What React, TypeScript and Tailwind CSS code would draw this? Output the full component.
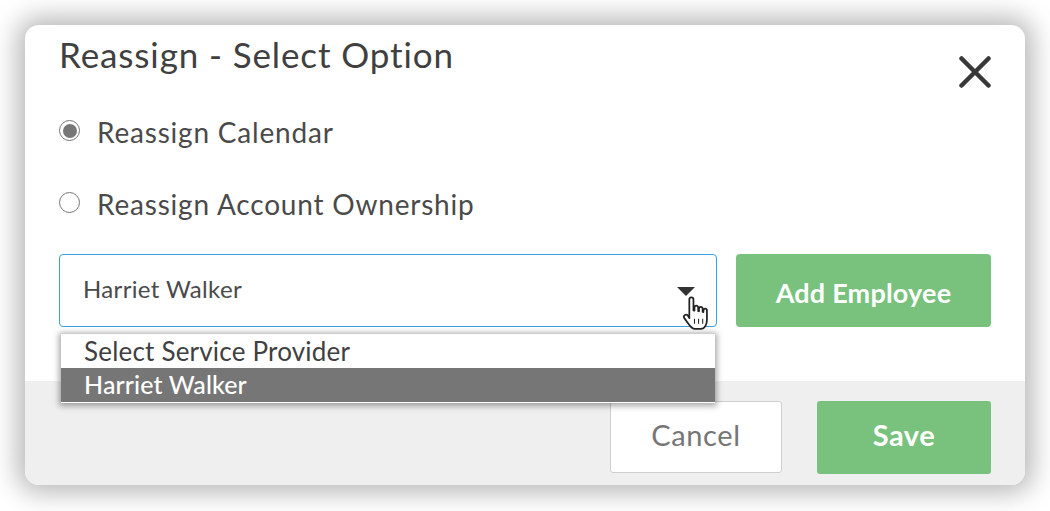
const font = "font-['Lato','Noto_Sans',sans-serif] [font-variant-ligatures:none]";

function Radio({ checked, label }: { checked?: boolean; label: string }) {
  return (
    <label className="flex items-center h-[34px]">
      <span className="w-[21px] h-[21px] rounded-full border border-[#767676] bg-white flex items-center justify-center -mt-[5px]">
        {checked && <span className="w-[14px] h-[14px] rounded-full bg-[#767676]" />}
      </span>
      <span className="ml-[17px] -mt-[2px] text-[28px] leading-[32px] tracking-[0.8px] text-[#4a4a4a]">{label}</span>
    </label>
  );
}

function HandCursor() {
  return (
    <svg className="absolute left-[682px] top-[296px]" width="27" height="35" viewBox="0 0 26 34">
      <path
        d="M7 3.500c0-3 4-3 4 0V14l1 .2v-3c0-2.400 3.400-2.400 3.600 0v3.400l.8.2v-2.400c0-2.300 3.400-2.300 3.500 0v3l.8.2v-1.600c0-2.200 3.400-2.200 3.400 0V23c0 4-1.800 9-6 9h-5.500c-3 0-4.500-2-6.500-5l-4-5.500c-1.500-2.500 1.500-4.500 3.500-2.500L7 21.500z"
        fill="#fff"
        stroke="#222"
        strokeWidth="1.700"
        strokeLinejoin="round"
      />
      <path d="M12 22v5M16 22v5M20 22v5" stroke="#222" strokeWidth="1" fill="none" />
    </svg>
  );
}

export default function App() {
  return (
    <div className={"w-[1050px] h-[511px] bg-white p-[25px] relative overflow-hidden " + font}>
      <div className="w-[1000px] h-[460px] rounded-[14px] bg-white shadow-[0_0_26px_8px_rgba(0,0,0,0.28)] flex flex-col overflow-hidden">
        {/* body */}
        <div className="h-[356px] pl-[34px] pr-[34px]">
          <div className="flex items-start justify-between">
            <h2 className="text-[35px] leading-[40px] mt-[9px] tracking-[0.88px] text-[#404040] font-normal">Reassign - Select Option</h2>
            <svg className="mt-[31px]" width="32" height="32" viewBox="0 0 32 32">
              <path d="M2.500 2.500 L29.500 29.500 M29.500 2.500 L2.500 29.500" stroke="#383838" strokeWidth="4.500" strokeLinecap="round" />
            </svg>
          </div>

          <div className="mt-[28px] flex flex-col gap-[38px]">
            <Radio checked label="Reassign Calendar" />
            <Radio label="Reassign Account Ownership" />
          </div>

          <div className="flex mt-[32px] gap-[19px]">
            <div className="w-[658px] h-[73px] border-[1.5px] border-[#3b9fe3] rounded-[4px] flex items-center pl-[23px] pr-[20px] justify-between">
              <span className="text-[24px] tracking-[0.35px] -mt-[3px] text-[#4a4a4a]">Harriet Walker</span>
              <span className="w-0 h-0 mt-[2px] mr-[1px] border-l-[9px] border-r-[9px] border-t-[9px] border-l-transparent border-r-transparent border-t-[#333]" />
            </div>
            <button className="w-[255px] h-[73px] rounded-[4px] bg-[#78c27d] text-white text-[27px] tracking-[0.2px] pt-[5px] font-bold">Add Employee</button>
          </div>
        </div>

        {/* footer */}
        <div className="flex-1 bg-[#efefef] flex justify-end items-start gap-[35px] pt-[20px] pr-[34px]">
          <button className="w-[172px] h-[72px] bg-white border border-[#cfcfcf] rounded-[3px] text-[29px] tracking-[0.6px] pb-[4px] text-[#767676]">Cancel</button>
          <button className="w-[174px] h-[73px] bg-[#78c27d] rounded-[3px] text-white text-[29px] tracking-[0.5px] pb-[6px] font-bold">Save</button>
        </div>
      </div>

      {/* open dropdown list */}
      <div className="absolute left-[61px] top-[334px] w-[654px] h-[69px] bg-white shadow-[0_1px_6px_2px_rgba(0,0,0,0.35)] text-[26px] leading-[34px] tracking-[0.2px]">
        <div className="h-[34px] pl-[23px] text-[#404040]">Select Service Provider</div>
        <div className="h-[34px] pl-[23px] bg-[#767676] text-white text-[25px] font-medium tracking-[0.1px]">
          <span className="relative -top-[1px]">Harriet Walker</span>
        </div>
      </div>

      <HandCursor />
    </div>
  );
}
